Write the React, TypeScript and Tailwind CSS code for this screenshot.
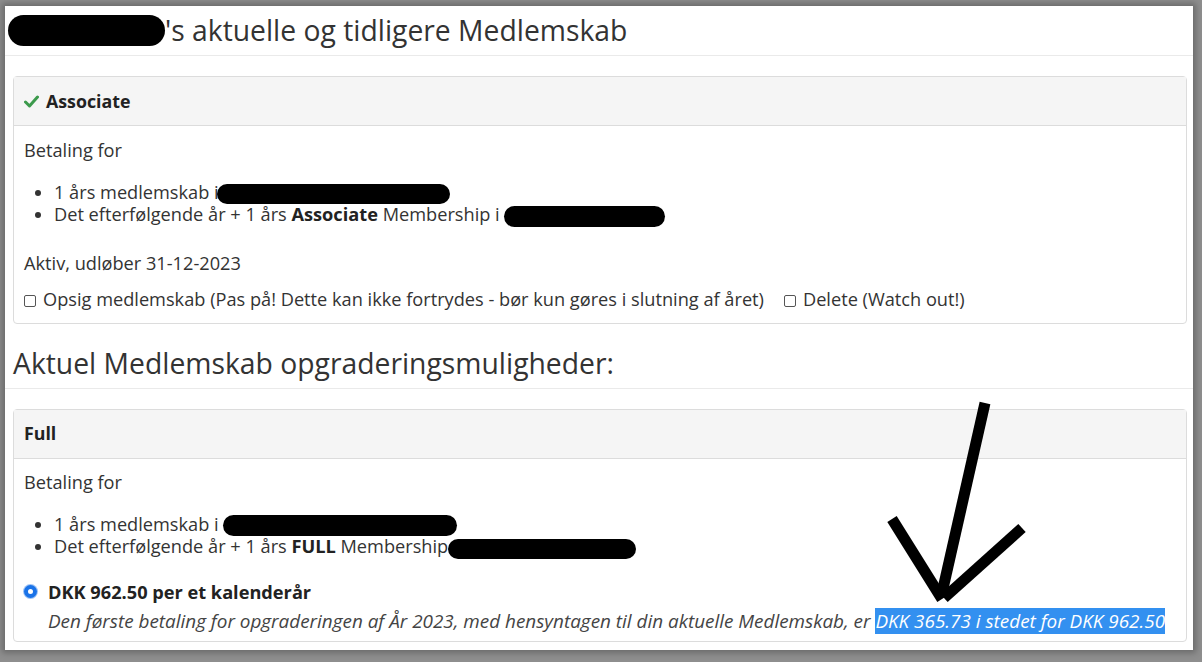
import React from 'react';

const Blot = ({ className }: { className: string }) => (
  <span className={`inline-block bg-black rounded-full align-middle ${className}`} />
);

const CheckIcon = () => (
  <svg width="15" height="13" viewBox="0 0 15 13" className="inline-block mr-[7px]">
    <path d="M1.5 7 L5.5 11 L13.5 2" stroke="#3c9a4c" strokeWidth="3" fill="none" strokeLinecap="round" strokeLinejoin="round" />
  </svg>
);

const Checkbox = () => (
  <span className="inline-block w-[12px] h-[12px] border border-[#555] rounded-[2px] bg-white mr-[7px] align-[-1px]" />
);

const Panel = ({ title, children }: { title: React.ReactNode; children: React.ReactNode }) => (
  <div className="border border-[#dcdcdc] rounded-[4px] bg-white">
    <div className="h-[49px] flex items-center px-[10px] bg-[#f5f5f5] border-b border-[#dcdcdc] font-bold text-[#222] text-[17.8px]">
      {title}
    </div>
    <div className="px-[10px]">{children}</div>
  </div>
);

export default function App() {
  return (
    <div
      className="w-[1202px] h-[662px] bg-[#8e8e8e] pl-[5px] pt-[6px] pr-[9px] pb-[12px] overflow-hidden"
      style={{ fontFamily: '"Open Sans", "Noto Sans", sans-serif' }}
    >
      <div className="relative w-full h-full bg-white shadow-[0_0_6px_3px_rgba(0,0,0,0.25)] text-[#333] text-[18.2px]">
        {/* Title */}
        <div className="h-[50px] flex items-center border-b border-[#eaeaea] pl-[3px]">
          <Blot className="w-[157px] h-[31px]" />
          <span className="text-[28.3px] text-[#333] leading-none">'s aktuelle og tidligere Medlemskab</span>
        </div>

        <div className="pl-[8px] pr-[6px] pt-[20px]">
          <Panel
            title={
              <span className="flex items-center">
                <CheckIcon />
                Associate
              </span>
            }
          >
            <p className="pt-[12px] leading-[24px]">Betaling for</p>
            <ul className="mt-[20px] pl-[30px] list-disc leading-[21px]">
              <li>
                1 års medlemskab i<Blot className="w-[233px] h-[20px] ml-[-2px]" />
              </li>
              <li>
                Det efterfølgende år + 1 års <b className="text-[#222]">Associate</b> Membership i{' '}
                <Blot className="w-[161px] h-[21px]" />
              </li>
            </ul>
            <p className="mt-[24px] leading-[24px]">Aktiv, udløber 31-12-2023</p>
            <p className="mt-[12px] mb-[12px] leading-[24px]">
              <Checkbox />
              Opsig medlemskab (Pas på! Dette kan ikke fortrydes - bør kun gøres i slutning af året)
              <span className="ml-[20px]">
                <Checkbox />
                Delete (Watch out!)
              </span>
            </p>
          </Panel>

          <div className="h-[65px] flex items-center border-b border-[#eaeaea] -ml-[8px] -mr-[6px] pl-[8px]">
            <h2 className="text-[28.3px] text-[#333] leading-none pt-[14px]">Aktuel Medlemskab opgraderingsmuligheder:</h2>
          </div>

          <div className="mt-[20px]">
            <Panel title="Full">
              <p className="pt-[11px] leading-[24px]">Betaling for</p>
              <ul className="mt-[20px] pl-[30px] list-disc leading-[21px]">
                <li>
                  1 års medlemskab i <Blot className="w-[234px] h-[21px]" />
                </li>
                <li>
                  Det efterfølgende år + 1 års <b className="text-[#222]">FULL</b> Membership
                  <Blot className="w-[188px] h-[20px]" />
                </li>
              </ul>
              <div className="mt-[21px] flex items-center leading-[24px]">
                <span className="w-[13px] h-[13px] rounded-full border-[4px] border-[#1a73e8] bg-white mr-[11px] shadow-[0_0_0_1px_#9ec3f5]" />
                <b className="text-[#222]">DKK 962.50 per et kalenderår</b>
              </div>
              <p className="italic pl-[24px] mt-[5px] mb-[8px] leading-[24px] text-[#444] text-[18.9px] whitespace-nowrap">
                Den første betaling for opgraderingen af År 2023, med hensyntagen til din aktuelle Medlemskab, er{' '}
                <span className="bg-[#3390f0] text-white">DKK 365.73 i stedet for DKK 962.50</span>
              </p>
            </Panel>
          </div>
        </div>

        {/* hand-drawn arrow */}
        <svg className="absolute left-0 top-0 pointer-events-none" width="1187" height="644">
          <g stroke="#000" strokeWidth="11" fill="none">
            <line x1="980" y1="397" x2="937" y2="587" />
            <line x1="887" y1="513" x2="937" y2="593" />
            <line x1="1017" y1="522" x2="939" y2="592" />
          </g>
        </svg>
      </div>
    </div>
  );
}
